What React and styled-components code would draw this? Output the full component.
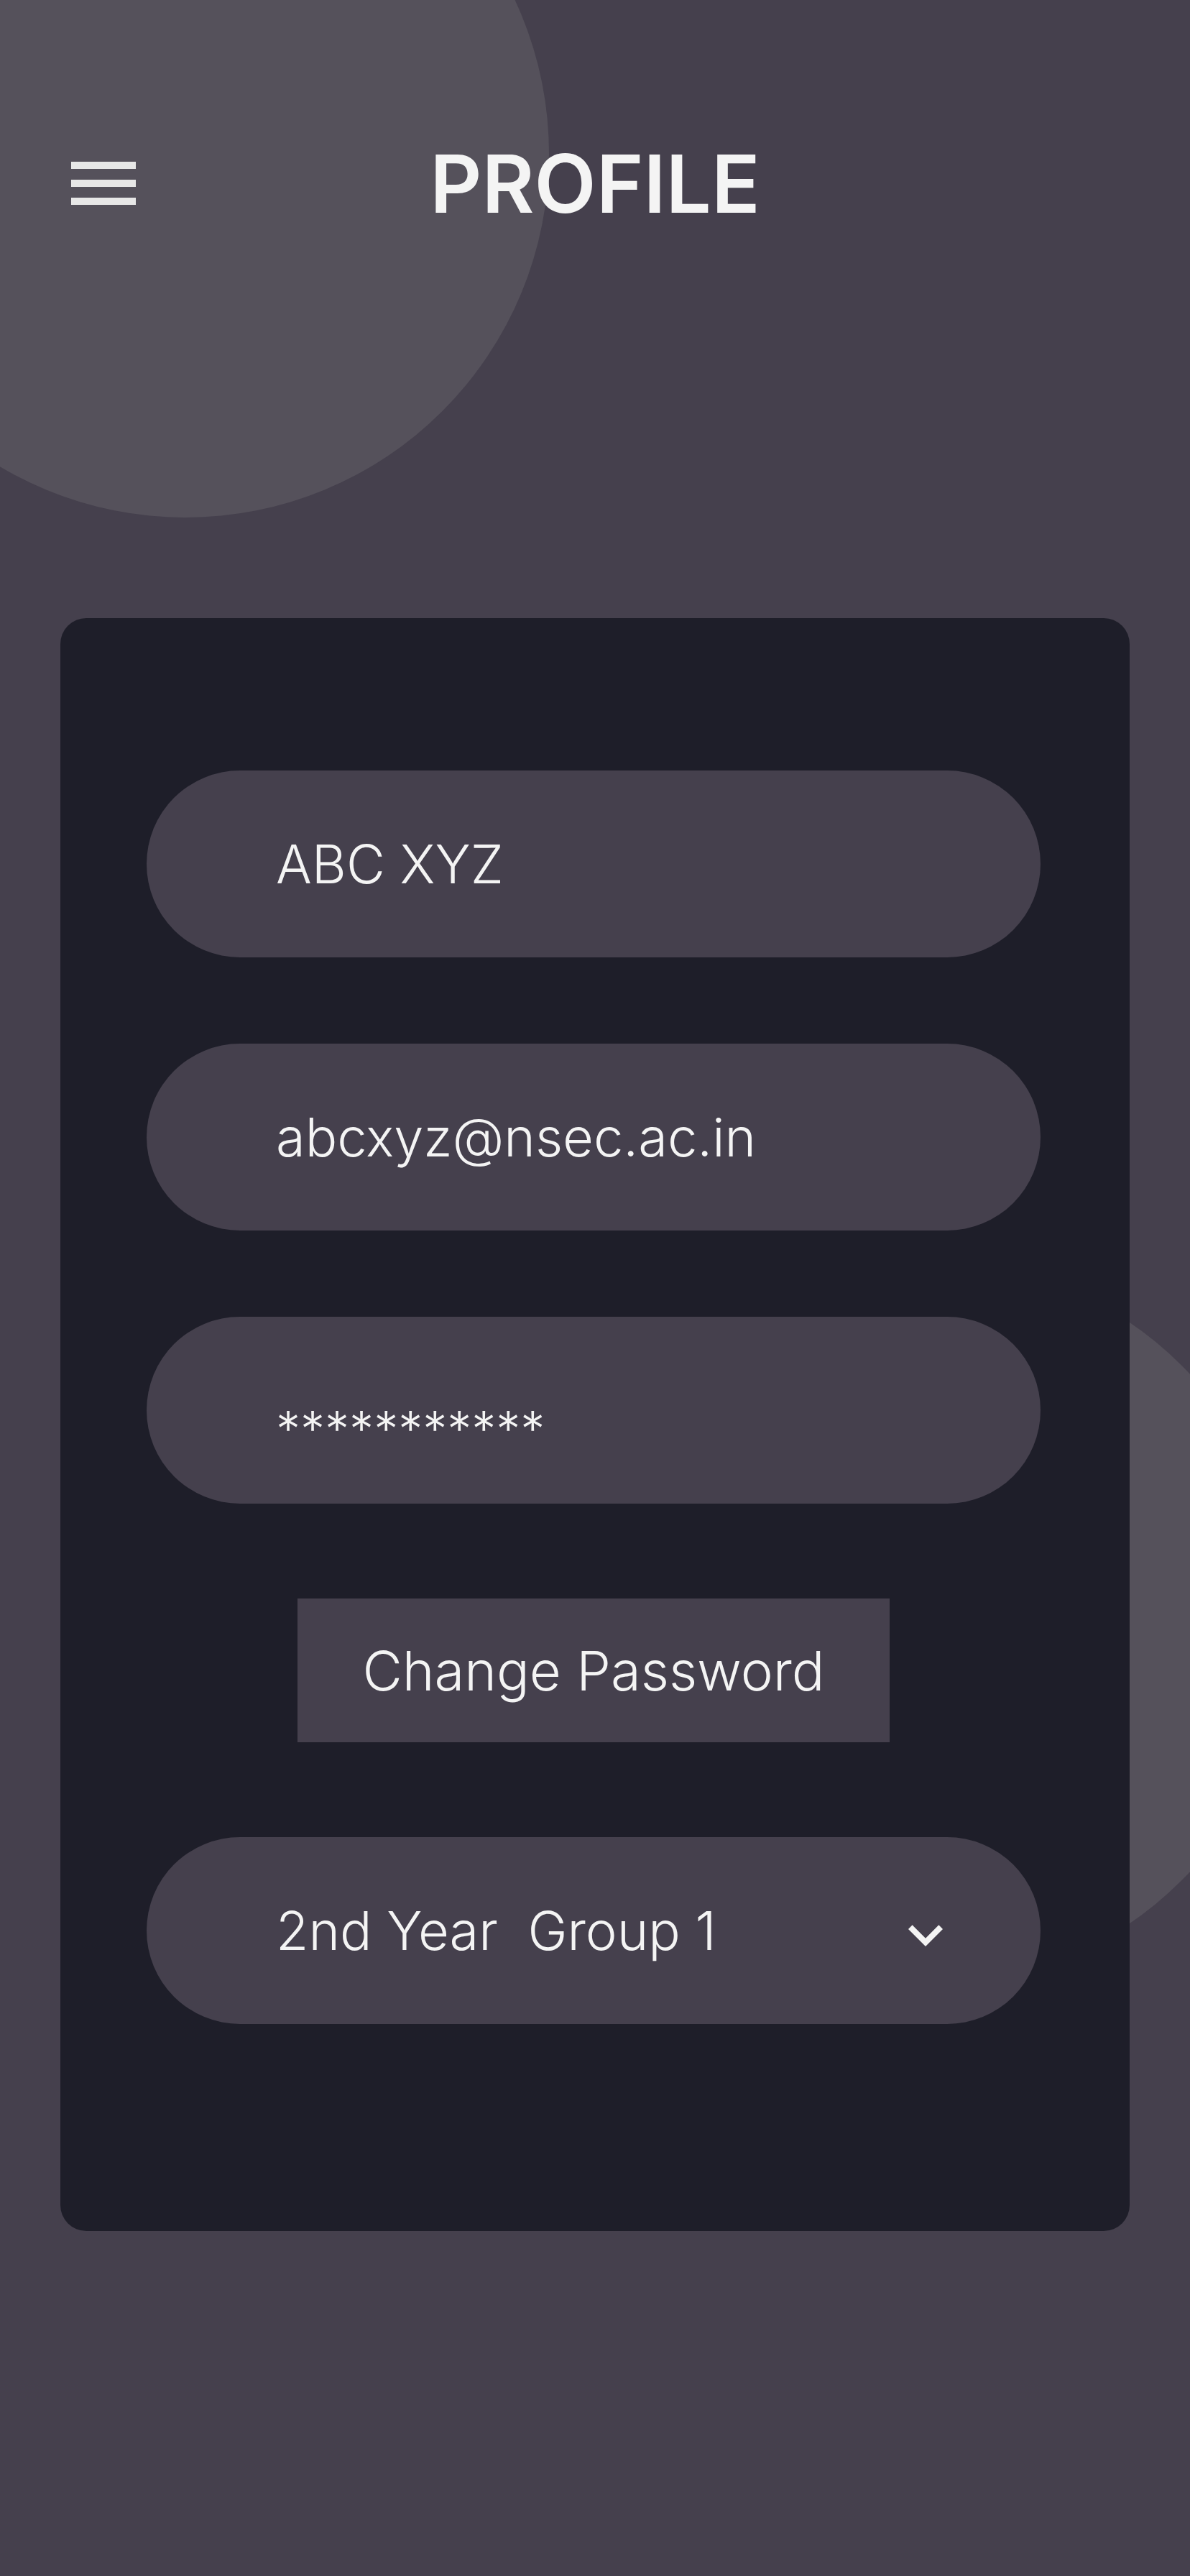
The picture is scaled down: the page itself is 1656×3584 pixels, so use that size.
import React, { useState } from 'react';
import styled, { createGlobalStyle, css } from 'styled-components';

const color = {
  page: '#45404d',
  bubble: '#55515b',
  card: '#1e1e29',
  field: '#45404d',
  text: '#f4f4f4',
  bars: '#e7e7e7',
};

const GlobalStyle = createGlobalStyle`
  *, *::before, *::after { box-sizing: border-box; }
  body {
    margin: 0;
    background: ${color.page};
    color: ${color.text};
    font-family: Inter, "Liberation Sans", sans-serif;
  }
`;

const Page = styled.div`
  position: relative;
  isolation: isolate;
  overflow: hidden;
  min-height: 100vh;
  padding-bottom: 120px;
`;

const Bubble = styled.div`
  position: absolute;
  z-index: -1;
  top: ${(p) => p.$top}px;
  ${(p) => p.$side}: ${(p) => p.$offset}px;
  width: 1012px;
  height: 1012px;
  border-radius: 50%;
  background: ${color.bubble};
`;

const Header = styled.header`
  display: grid;
  grid-template-columns: 1fr auto 1fr;
  align-items: center;
  padding: 186px 99px 0;
`;

const MenuButton = styled.button`
  justify-self: start;
  display: flex;
  padding: 0;
  border: 0;
  background: none;
  color: ${color.bars};
  cursor: pointer;
`;

const Title = styled.h1`
  margin: 0;
  font-size: 112px;
  font-weight: 600;
  line-height: 138px;
`;

const Card = styled.form`
  display: flex;
  flex-direction: column;
  margin: 536px 84px 0;
  padding: 212px 124px 288px 120px;
  border-radius: 36px;
  background: ${color.card};
`;

const Fields = styled.div`
  display: flex;
  flex-direction: column;
  gap: 120px;
`;

const pill = css`
  display: block;
  width: 100%;
  min-width: 0;
  height: 260px;
  padding: 0 180px;
  border: 0;
  border-radius: 130px;
  outline: 0;
  background: ${color.field};
  color: inherit;
  font-family: inherit;
  font-size: 74px;
  font-weight: 300;
`;

const TextField = styled.input`
  ${pill}
`;

const MaskedField = styled(TextField)`
  padding-top: 52px;
  font-size: 68px;
`;

const ChangeButton = styled.button`
  align-self: center;
  height: 200px;
  margin: 132px 0;
  padding: 0 90px;
  border: 0;
  background: ${color.field};
  color: inherit;
  font-family: inherit;
  font-size: 76px;
  font-weight: 300;
  white-space: nowrap;
  cursor: pointer;
`;

const SelectWrap = styled.div`
  position: relative;
`;

const Select = styled.select`
  ${pill}
  appearance: none;
  cursor: pointer;
`;

const Chevron = styled.svg`
  position: absolute;
  top: 88px;
  right: 112px;
  width: 96px;
  height: 96px;
  fill: ${color.text};
  pointer-events: none;
`;

const groups = ['2nd Year\u00a0 Group 1'];

export default function App() {
  const [name, setName] = useState('ABC XYZ');
  const [email, setEmail] = useState('abcxyz@nsec.ac.in');
  const [group, setGroup] = useState(groups[0]);

  return (
    <>
      <GlobalStyle />
      <Page>
        <Bubble $side="left" $offset={-248} $top={-292} />
        <Bubble $side="right" $offset={-137} $top={1752} />
        <Header>
          <MenuButton type="button" aria-label="Menu">
            <svg width="90" height="60" viewBox="0 0 90 60" fill="currentColor" aria-hidden="true">
              <rect width="90" height="10" />
              <rect y="25" width="90" height="10" />
              <rect y="50" width="90" height="10" />
            </svg>
          </MenuButton>
          <Title>PROFILE</Title>
        </Header>
        <Card onSubmit={(e) => e.preventDefault()}>
          <Fields>
            <TextField aria-label="Name" value={name} onChange={(e) => setName(e.target.value)} />
            <TextField
              type="email"
              aria-label="Email"
              value={email}
              onChange={(e) => setEmail(e.target.value)}
            />
            <MaskedField aria-label="Password" value="***********" readOnly />
          </Fields>
          <ChangeButton type="button">Change Password</ChangeButton>
          <SelectWrap>
            <Select aria-label="Year and group" value={group} onChange={(e) => setGroup(e.target.value)}>
              {groups.map((g) => (
                <option key={g} value={g}>{g}</option>
              ))}
            </Select>
            <Chevron viewBox="0 0 24 24" aria-hidden="true">
              <path d="M16.59 8.59 12 13.17 7.41 8.59 6 10l6 6 6-6z" />
            </Chevron>
          </SelectWrap>
        </Card>
      </Page>
    </>
  );
}
